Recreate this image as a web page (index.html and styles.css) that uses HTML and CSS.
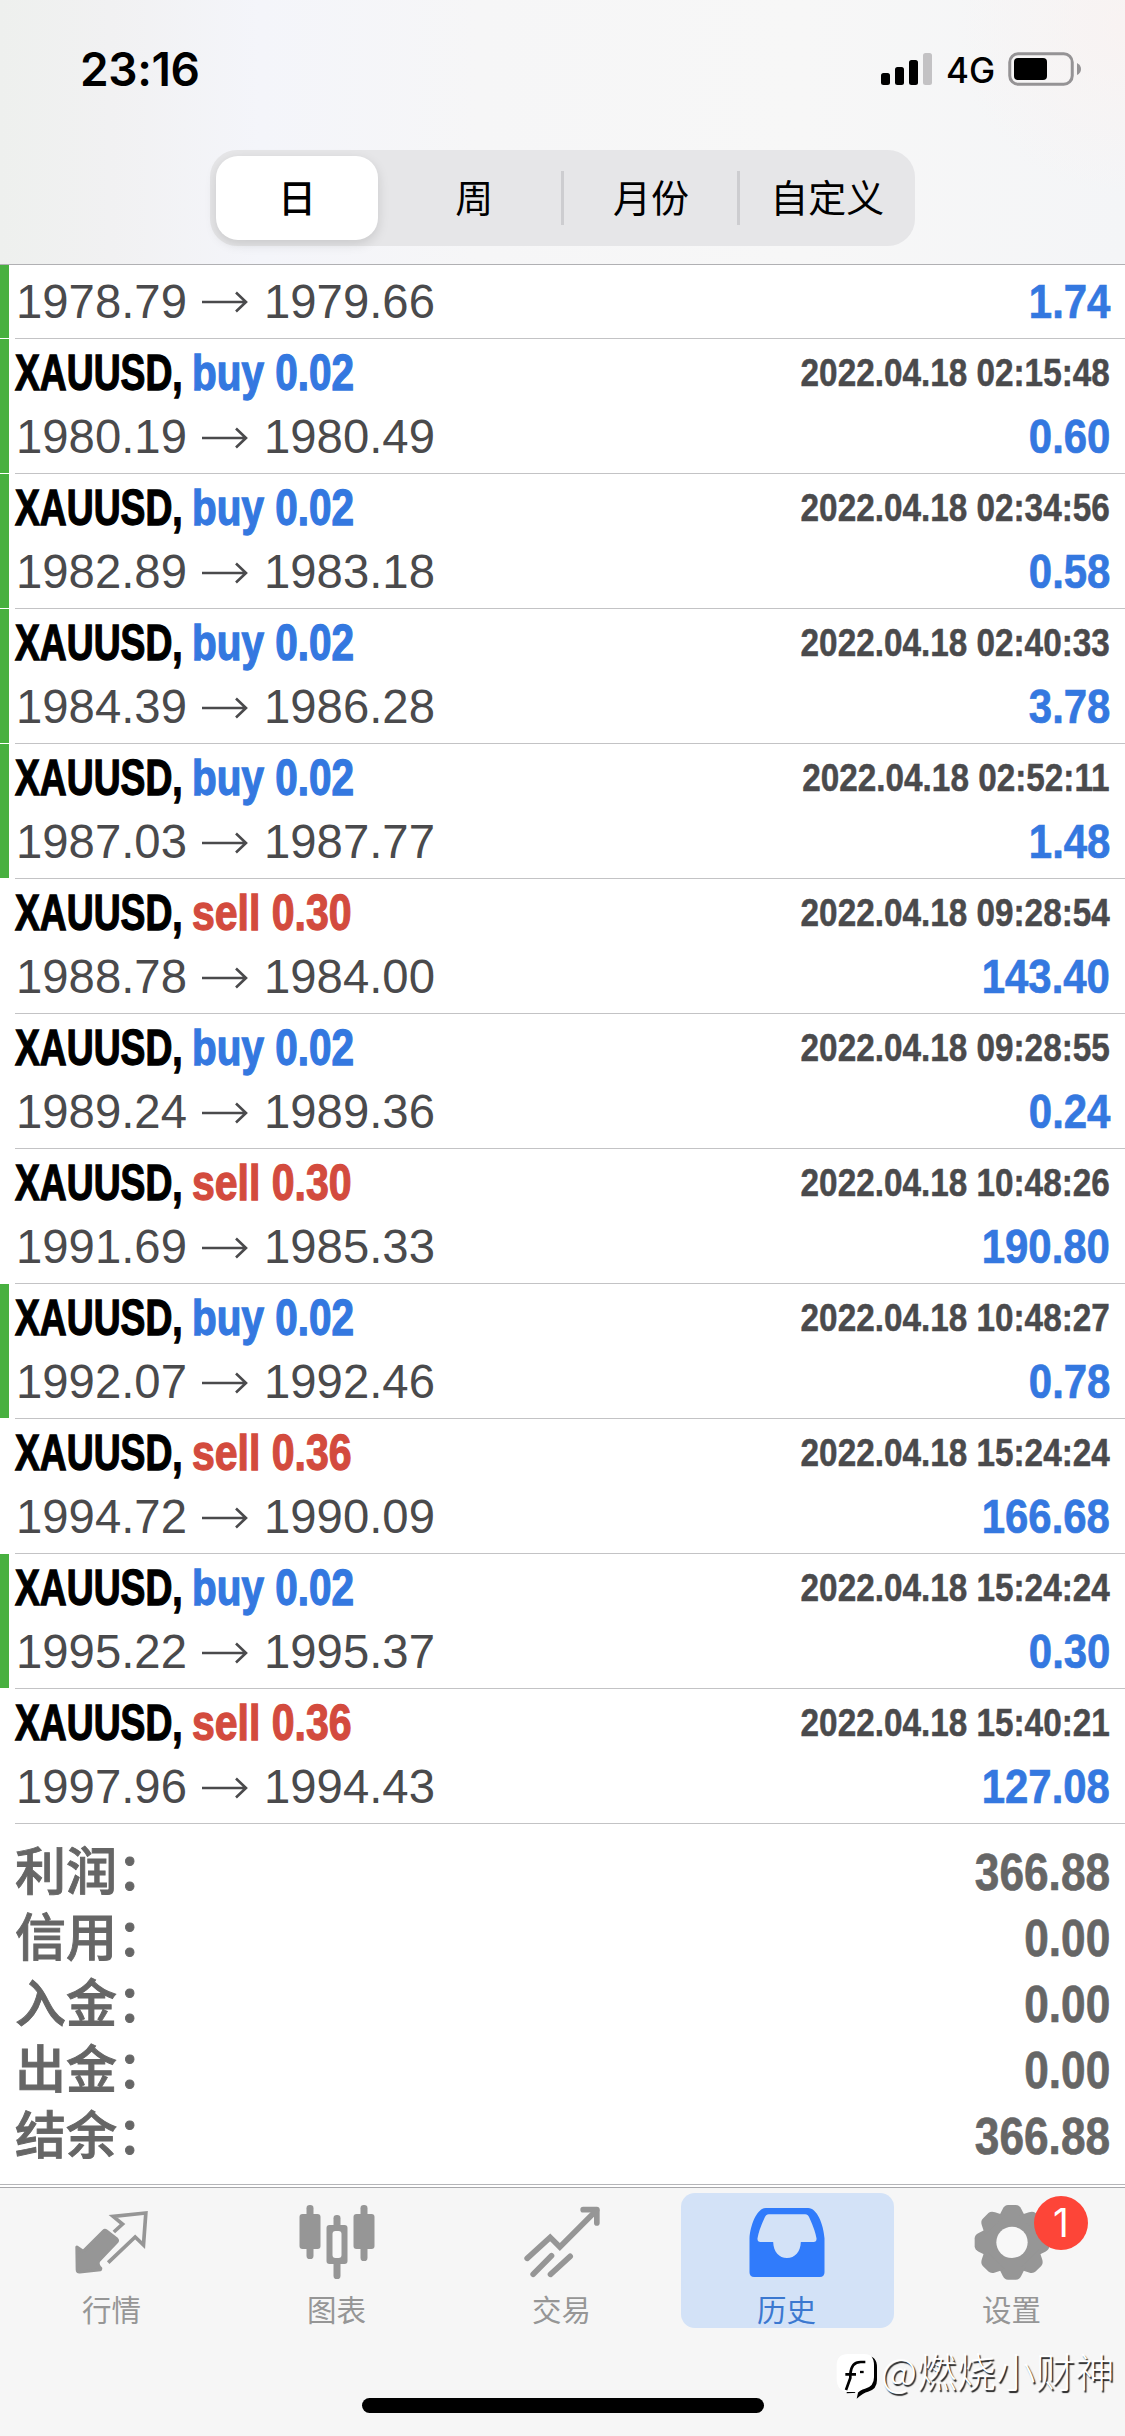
FILE: index.html
```html
<!DOCTYPE html>
<html lang="zh-CN">
<head>
<meta charset="utf-8">
<title>历史</title>
<link rel="stylesheet" href="styles.css">
</head>
<body>
<div class="screen">
  <header class="header">
    <div class="status">
      <span class="clock">23:16</span>
      <div class="status-right">
        <svg class="signal" width="51" height="34" viewBox="0 0 51 34"><rect x="0" y="21" width="9" height="12" rx="2.5"/><rect x="14" y="15" width="9" height="18" rx="2.5"/><rect x="28" y="8" width="9" height="25" rx="2.5"/><rect x="42" y="1" width="9" height="32" rx="2.5" fill="#c3c2c4"/></svg>
        <span class="net">4G</span>
        <svg class="battery" width="74" height="34" viewBox="0 0 74 34"><rect x="1.75" y="1.75" width="62.5" height="30.5" rx="8.5" fill="none" stroke="#959395" stroke-width="3"/><rect x="6" y="6" width="33" height="22" rx="4"/><path d="M69 11q4 2 4 6t-4 6z" fill="#959395"/></svg>
      </div>
    </div>
    <nav class="segments">
      <span class="segment selected">日</span>
      <span class="segment">周</span>
      <span class="segment divided">月份</span>
      <span class="segment divided">自定义</span>
    </nav>
  </header>

  <svg class="defs" width="0" height="0"><symbol id="arrow" viewBox="0 0 46 22"><path d="M0 11H44M34 1.500L44 11L34 20.500" fill="none" stroke="#4a4a4c" stroke-width="2.600"/></symbol></svg>

  <main class="history">
    <div class="deal partial win"><div class="body">
      <div class="line prices"><span class="price">1978.79</span><svg class="arrow"><use href="#arrow"/></svg><span class="price">1979.66</span><span class="profit">1.74</span></div>
    </div></div>
    <div class="deal win"><div class="body">
      <div class="line"><span class="symbol">XAUUSD,</span><span class="buy">buy 0.02</span><span class="time">2022.04.18 02:15:48</span></div>
      <div class="line prices"><span class="price">1980.19</span><svg class="arrow"><use href="#arrow"/></svg><span class="price">1980.49</span><span class="profit">0.60</span></div>
    </div></div>
    <div class="deal win"><div class="body">
      <div class="line"><span class="symbol">XAUUSD,</span><span class="buy">buy 0.02</span><span class="time">2022.04.18 02:34:56</span></div>
      <div class="line prices"><span class="price">1982.89</span><svg class="arrow"><use href="#arrow"/></svg><span class="price">1983.18</span><span class="profit">0.58</span></div>
    </div></div>
    <div class="deal win"><div class="body">
      <div class="line"><span class="symbol">XAUUSD,</span><span class="buy">buy 0.02</span><span class="time">2022.04.18 02:40:33</span></div>
      <div class="line prices"><span class="price">1984.39</span><svg class="arrow"><use href="#arrow"/></svg><span class="price">1986.28</span><span class="profit">3.78</span></div>
    </div></div>
    <div class="deal win"><div class="body">
      <div class="line"><span class="symbol">XAUUSD,</span><span class="buy">buy 0.02</span><span class="time">2022.04.18 02:52:11</span></div>
      <div class="line prices"><span class="price">1987.03</span><svg class="arrow"><use href="#arrow"/></svg><span class="price">1987.77</span><span class="profit">1.48</span></div>
    </div></div>
    <div class="deal"><div class="body">
      <div class="line"><span class="symbol">XAUUSD,</span><span class="sell">sell 0.30</span><span class="time">2022.04.18 09:28:54</span></div>
      <div class="line prices"><span class="price">1988.78</span><svg class="arrow"><use href="#arrow"/></svg><span class="price">1984.00</span><span class="profit">143.40</span></div>
    </div></div>
    <div class="deal"><div class="body">
      <div class="line"><span class="symbol">XAUUSD,</span><span class="buy">buy 0.02</span><span class="time">2022.04.18 09:28:55</span></div>
      <div class="line prices"><span class="price">1989.24</span><svg class="arrow"><use href="#arrow"/></svg><span class="price">1989.36</span><span class="profit">0.24</span></div>
    </div></div>
    <div class="deal"><div class="body">
      <div class="line"><span class="symbol">XAUUSD,</span><span class="sell">sell 0.30</span><span class="time">2022.04.18 10:48:26</span></div>
      <div class="line prices"><span class="price">1991.69</span><svg class="arrow"><use href="#arrow"/></svg><span class="price">1985.33</span><span class="profit">190.80</span></div>
    </div></div>
    <div class="deal win"><div class="body">
      <div class="line"><span class="symbol">XAUUSD,</span><span class="buy">buy 0.02</span><span class="time">2022.04.18 10:48:27</span></div>
      <div class="line prices"><span class="price">1992.07</span><svg class="arrow"><use href="#arrow"/></svg><span class="price">1992.46</span><span class="profit">0.78</span></div>
    </div></div>
    <div class="deal"><div class="body">
      <div class="line"><span class="symbol">XAUUSD,</span><span class="sell">sell 0.36</span><span class="time">2022.04.18 15:24:24</span></div>
      <div class="line prices"><span class="price">1994.72</span><svg class="arrow"><use href="#arrow"/></svg><span class="price">1990.09</span><span class="profit">166.68</span></div>
    </div></div>
    <div class="deal win"><div class="body">
      <div class="line"><span class="symbol">XAUUSD,</span><span class="buy">buy 0.02</span><span class="time">2022.04.18 15:24:24</span></div>
      <div class="line prices"><span class="price">1995.22</span><svg class="arrow"><use href="#arrow"/></svg><span class="price">1995.37</span><span class="profit">0.30</span></div>
    </div></div>
    <div class="deal"><div class="body">
      <div class="line"><span class="symbol">XAUUSD,</span><span class="sell">sell 0.36</span><span class="time">2022.04.18 15:40:21</span></div>
      <div class="line prices"><span class="price">1997.96</span><svg class="arrow"><use href="#arrow"/></svg><span class="price">1994.43</span><span class="profit">127.08</span></div>
    </div></div>

    <div class="totals">
      <div class="total"><span>利润：</span><span class="amount">366.88</span></div>
      <div class="total"><span>信用：</span><span class="amount">0.00</span></div>
      <div class="total"><span>入金：</span><span class="amount">0.00</span></div>
      <div class="total"><span>出金：</span><span class="amount">0.00</span></div>
      <div class="total"><span>结余：</span><span class="amount">366.88</span></div>
    </div>
  </main>

  <footer class="tabbar">
    <nav class="tabs">
      <div class="tab">
        <svg class="icon" viewBox="214.500 90 240 240"><path d="M229 234L248 247L309 186Q313 182 318 186L349 210Q353 214 349 219L294 277Q290 287 301 298L300 302L238 309Q230 310 230 302Z" stroke="#969696" stroke-width="9" stroke-linejoin="round" fill="#969696"/><path d="M340 189L366 165L338 142L436 132L429 228L404 204L323 281" fill="none" stroke="#969696" stroke-width="11"/></svg>
        <span>行情</span>
      </div>
      <div class="tab">
        <svg class="icon" viewBox="889.500 90 240 240"><g fill="#969696"><rect x="918" y="108" width="21" height="162" rx="10"/><rect x="897" y="135" width="63" height="105" rx="9"/><rect x="999" y="138" width="21" height="192" rx="10"/><rect x="978" y="168" width="63" height="117" rx="9"/><rect x="1080" y="108" width="21" height="168" rx="10"/><rect x="1059" y="135" width="63" height="105" rx="9"/></g><rect x="996" y="186" width="27" height="81" rx="9" fill="#f8f8f8"/></svg>
        <span>图表</span>
      </div>
      <div class="tab">
        <svg class="icon" viewBox="364.500 90 240 240"><g fill="none" stroke="#969696" stroke-width="17"><path d="M380 268L449 205L478 234L588 124M398 316L453 260M450 316L509 262" stroke-linecap="round"/><path d="M548 122H589V162" stroke-linecap="round" stroke-linejoin="round"/></g></svg>
        <span>交易</span>
      </div>
      <div class="tab active">
        <svg class="icon" viewBox="1039.500 90 240 240"><path fill="#307bfb" fill-rule="evenodd" d="M1047 208C1050 165 1070 117 1096 117H1223C1249 117 1269 165 1272 208V310Q1272 324 1258 324H1061Q1047 324 1047 310ZM1105 136Q1096 136 1091 149Q1075 184 1071 208Q1070 219 1080 219H1118C1119 249 1136 267 1159.500 267C1183 267 1200 249 1201 219H1239Q1249 219 1248 208Q1244 184 1228 149Q1223 136 1214 136Z"/></svg>
        <span>历史</span>
      </div>
      <div class="tab">
        <svg class="icon" viewBox="514.500 90 240 240"><g transform="translate(634.500 220)" fill="#969696"><circle r="87"/><g id="teeth"><path id="tooth" d="M-42-72L-28-100Q-22-112-12-112H12Q22-112 28-100L42-72Z"/><use href="#tooth" transform="rotate(45)"/><use href="#tooth" transform="rotate(90)"/><use href="#tooth" transform="rotate(135)"/></g><use href="#teeth" transform="rotate(180)"/><circle r="47" fill="#f8f8f8"/></g></svg>
        <span>设置</span>
        <b class="badge">1</b>
      </div>
    </nav>
    <div class="home"></div>
    <div class="watermark">
      <svg width="42" height="48" viewBox="108 546 126 144"><path d="M150 558H200Q231 558 231 592V630Q231 658 204 665Q190 668 170 686L174 668L140 670Z" fill="#000"/><path d="M145 552H193Q222 552 222 586V622Q222 650 195 656Q180 659 168 674L165 666H140Q110 662 110 625V586Q110 552 145 552Z" fill="#fff"/><path d="M136 613H151M155 613H168M138 660L151 624V612Q154 576 182 576H196" fill="none" stroke="#000" stroke-width="8"/><path d="M180 606H191" stroke="#000" stroke-width="7"/></svg>
      <span>@燃烧小财神</span>
    </div>
  </footer>
</div>
</body>
</html>
```

FILE: styles.css
```css
* { box-sizing: border-box; }

body {
  margin: 0;
  background: #fff;
  font-family: "Liberation Sans", "Noto Sans CJK SC", sans-serif;
}

.screen {
  width: 1125px;
  height: 2436px;
  display: flex;
  flex-direction: column;
  overflow: hidden;
}

.defs { display: none; }

/* Status bar and period switch */
.header {
  height: 265px;
  flex: none;
  border-bottom: 1px solid #b0b0b3;
  background:
    radial-gradient(circle at 100% 10%, rgba(250, 242, 240, .7), rgba(250, 242, 240, 0) 170px),
    linear-gradient(90deg, #eef0ee 0, #f1f1f2 110px, #f4f5fa 260px, #f6f6f7 480px, #f7f7f7 800px, #f4f5f7 1125px);
}

.status {
  height: 150px;
  padding: 52px 43px 0 80px;
  display: flex;
  justify-content: space-between;
  align-items: flex-start;
}

.clock {
  font: 600 46px/35px Inter, sans-serif;
  letter-spacing: -.4px;
}

.status-right { display: flex; align-items: flex-start; }

.net {
  width: 62px;
  padding: 1px 0 0 14px;
  font: 500 35px/34px Inter, sans-serif;
}

.battery { margin-left: 14px; }

.segments {
  width: 705px;
  height: 96px;
  margin-left: 210px;
  padding: 6px 0;
  display: grid;
  grid-template-columns: repeat(4, 1fr);
  align-items: center;
  border-radius: 27px;
  background: #e6e6e8;
}

.segment {
  height: 84px;
  text-align: center;
  font: 400 38px/80px "Noto Sans CJK SC", sans-serif;
}

.segment.divided {
  height: 54px;
  margin-left: -2px;
  line-height: 50px;
  border-left: 3px solid #cdcdd0;
}

.segment.selected {
  width: 162px;
  margin-left: 6px;
  border-radius: 22px;
  background: #fff;
  font-weight: 500;
  box-shadow: 0 4px 12px rgba(0, 0, 0, .13);
}

/* Deals */
.history { height: 1919px; flex: none; }

.deal {
  height: 135px;
  display: flex;
}

.deal::before {
  content: "";
  width: 9px;
  height: 134px;
  margin-right: 6px;
}

.deal.win::before { background: #48b040; }

.deal .body {
  flex: 1;
  border-bottom: 1px solid #c3c3c5;
}

.partial { height: 74px; }
.partial::before { height: 73px; }
.partial .prices { height: 73px; line-height: 72px; }

.line {
  height: 67px;
  display: flex;
  line-height: 67px;
}

.prices { height: 66px; line-height: 60px; }

.symbol,
.buy,
.sell {
  font-weight: 700;
  font-size: 50px;
  line-height: 69px;
  white-space: nowrap;
  transform-origin: left;
  -webkit-text-stroke: 1.3px;
}

.symbol {
  width: 177px;
  transform: scaleX(.745);
}

.buy { width: 170px; color: #3478e0; transform: scaleX(.81); }
.sell { width: 170px; color: #d34b3e; transform: scaleX(.82); }

.time {
  margin-left: auto;
  margin-right: 15px;
  color: #4a4a4c;
  font-weight: 700;
  font-size: 39.5px;
  line-height: 66px;
  white-space: nowrap;
  transform: scaleX(.843);
  transform-origin: right;
  -webkit-text-stroke: .5px;
}

.price {
  width: 186px;
  margin-left: 1px;
  color: #4a4a4c;
  font-size: 48.5px;
  transform: scaleX(.975);
  transform-origin: left;
}

.price + .arrow + .price { margin-left: 16px; }

.arrow {
  width: 46px;
  height: 22px;
  align-self: flex-start;
  margin-top: 87px;
}

.prices .arrow { margin-top: 21px; }
.partial .arrow { margin-top: 26px; }

.profit {
  margin-left: auto;
  margin-right: 15px;
  color: #3478e0;
  font-weight: 700;
  font-size: 49px;
  transform: scaleX(.855);
  transform-origin: right;
  -webkit-text-stroke: .7px;
}

/* Totals */
.totals {
  padding: 15px 15px 0 15px;
  color: #666;
}

.total {
  height: 66px;
  display: flex;
  justify-content: space-between;
  align-items: baseline;
  font-weight: 500;
  font-size: 51px;
  line-height: 66px;
  -webkit-text-stroke: .9px;
}

.amount {
  font-weight: 700;
  font-size: 52px;
  transform: scaleX(.85);
  transform-origin: right;
  -webkit-text-stroke: .7px;
}

/* Tab bar */
.tabbar {
  position: relative;
  height: 252px;
  flex: none;
  border-top: 1px solid #b5b5b8;
  background: #f6f6f6;
}

.tabbar::before {
  content: "";
  display: block;
  height: 2px;
  border-bottom: 1px solid #a8a8ab;
  background: #fff;
}

.tabs {
  width: 1125px;
  padding-top: 5px;
  display: grid;
  grid-template-columns: repeat(5, 1fr);
}

.tab {
  position: relative;
  height: 135px;
  margin: 0 6px;
  padding: 6px 2px 0 0;
  display: flex;
  flex-direction: column;
  align-items: center;
  color: #969696;
  font: 400 29.5px/44px "Noto Sans CJK SC", sans-serif;
}

.tab.active {
  border-radius: 14px;
  background: #d3e2f7;
  color: #3b78d0;
}

.icon { width: 80px; height: 80px; overflow: visible; }
.tab span { margin-top: 7px; }

.badge {
  position: absolute;
  top: 3px;
  left: 128px;
  width: 54px;
  height: 54px;
  border-radius: 50%;
  background: #fd4538;
  color: #fff;
  text-align: center;
  font: 400 39px/54px Inter, sans-serif;
}

.home {
  width: 402px;
  height: 15px;
  margin: 70px 0 0 362px;
  border-radius: 8px;
  background: #000;
}

.watermark {
  position: absolute;
  left: 836px;
  top: 167px;
  display: flex;
  color: #fff;
  font: 300 39.5px/36px "Noto Sans CJK SC", sans-serif;
  text-shadow: 1.5px 1.5px 1px #222;
  white-space: nowrap;
}

.watermark span { margin-left: 3px; }
```
